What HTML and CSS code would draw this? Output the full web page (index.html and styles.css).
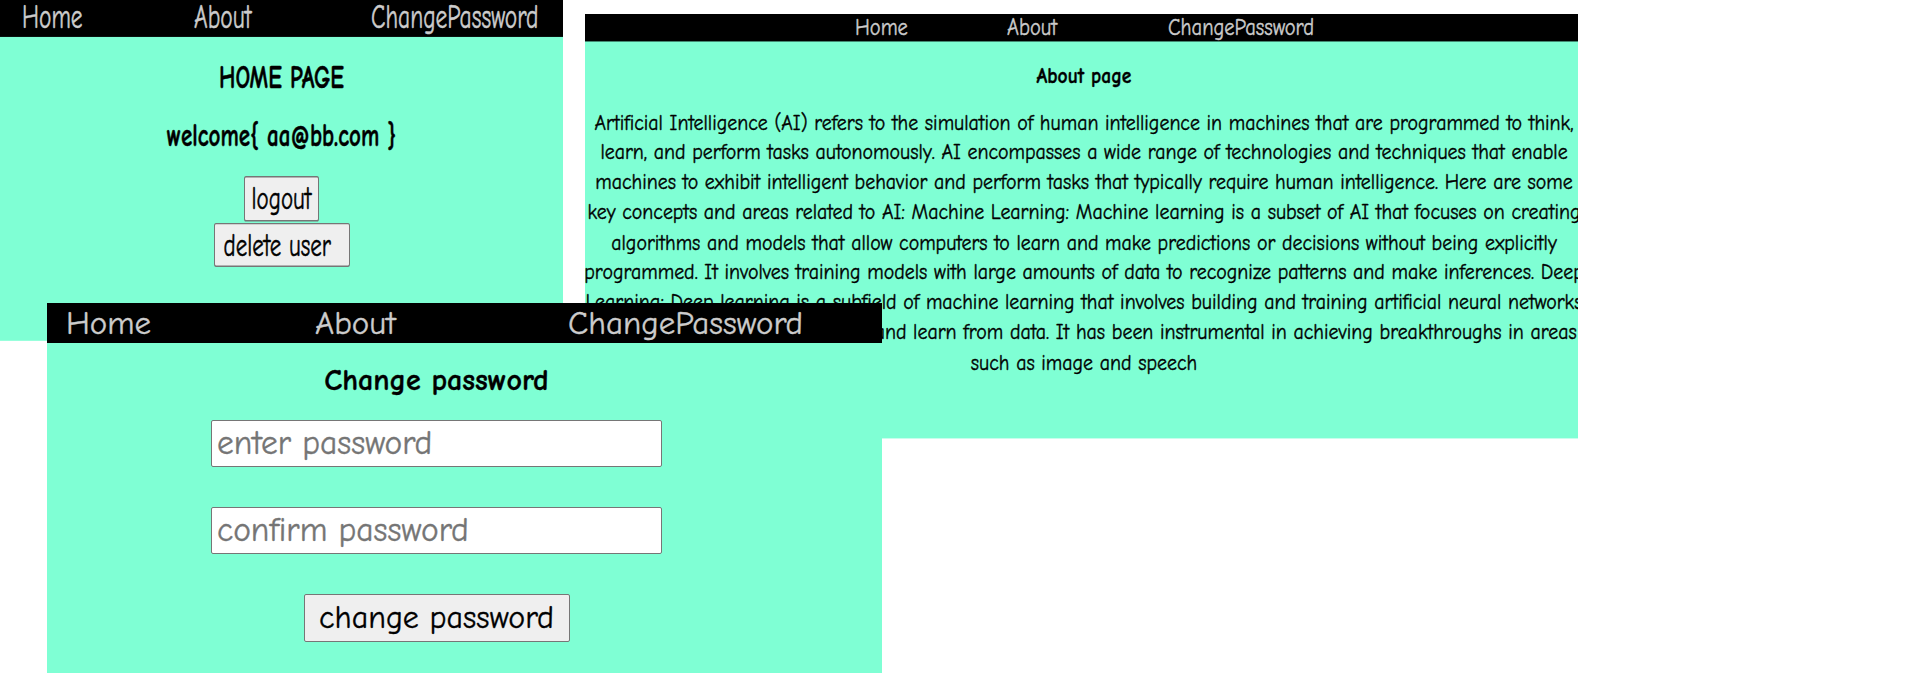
FILE: index.html
```html
<!DOCTYPE html>
<html lang="en">
<head>
<meta charset="utf-8">
<title>Pages</title>
<link rel="stylesheet" href="styles.css">
</head>
<body>
<div class="desk">
  <section class="win win-about">
    <nav class="nav nav-about"><a href="#">Home</a><a href="#">About</a><a href="#">ChangePassword</a></nav>
    <div class="about-body">
      <h3 class="about-title">About page</h3>
      <p class="about-text">Artificial Intelligence (AI) refers to the simulation of human intelligence in machines that are programmed to think,<br>learn, and perform tasks autonomously. AI encompasses a wide range of technologies and techniques that enable<br>machines to exhibit intelligent behavior and perform tasks that typically require human intelligence. Here are some<br>key concepts and areas related to AI: Machine Learning: Machine learning is a subset of AI that focuses on creating<br>algorithms and models that allow computers to learn and make predictions or decisions without being explicitly<br>programmed. It involves training models with large amounts of data to recognize patterns and make inferences. Deep<br>Learning: Deep learning is a subfield of machine learning that involves building and training artificial neural networks<br>that can mimic the human brain and learn from data. It has been instrumental in achieving breakthroughs in areas<br>such as image and speech</p>
    </div>
  </section>

  <section class="win win-home">
    <nav class="nav nav-home"><a href="#">Home</a><a href="#">About</a><a href="#">ChangePassword</a></nav>
    <h3 class="home-title">HOME PAGE</h3>
    <h3 class="welcome">welcome{ aa@bb.com }</h3>
    <div class="home-actions">
      <button class="btn btn-logout">logout</button>
      <button class="btn btn-delete">delete user</button>
    </div>
  </section>

  <section class="win win-change">
    <nav class="nav nav-change"><a href="#">Home</a><a href="#">About</a><a href="#">ChangePassword</a></nav>
    <div class="change-body">
      <h2 class="change-title">Change password</h2>
      <input class="field" type="password" placeholder="enter password">
      <input class="field" type="password" placeholder="confirm password">
      <button class="btn btn-change">change password</button>
    </div>
  </section>
</div>
</body>
</html>
```
FILE: styles.css
```css
html, body {
  margin: 0;
  padding: 0;
  background: #ffffff;
}

body {
  font-family: "Comic Neue", "Open Sans", sans-serif;
  color: #000;
  width: 1912px;
  height: 695px;
  overflow: hidden;
  -webkit-text-stroke: 0.35px currentColor;
}

.desk {
  position: relative;
  width: 1912px;
  height: 695px;
}

/* windows placed freely on the desktop canvas */
.win {
  position: absolute;
  background: #7fffd4;
  overflow: hidden;
  transform-origin: 0 0;
}

.win-home {
  left: 0;
  top: 0;
  width: 563px;
  height: 240.1px;
  transform: scaleY(1.42);
}

.win-about {
  left: 585px;
  top: 14px;
  width: 993px;
  height: 370.6px;
  transform: scaleY(1.144);
}

.win-change {
  left: 47px;
  top: 303px;
  width: 835px;
  height: 370px;
}

/* nav bars */
.nav {
  display: grid;
  align-items: start;
  background: #000;
}

.nav a {
  color: #cccccc;
  text-decoration: none;
  white-space: nowrap;
}

.nav-home {
  height: 26.06px;
  padding-left: 22px;
  grid-template-columns: 172px 177px auto;
  font-size: 23.5px;
  line-height: 26px;
}

.nav-about {
  height: 23.6px;
  padding-left: 270px;
  grid-template-columns: 152px 161px auto;
  font-size: 20.5px;
  line-height: 23.6px;
}

.nav-change {
  height: 40px;
  padding-left: 19px;
  grid-template-columns: 249px 253px auto;
  font-size: 33px;
  line-height: 40px;
}

/* buttons */
.btn {
  font-family: inherit;
  color: #000;
  background: #efefef;
  border: 1px solid #767676;
  border-radius: 2px;
  padding: 0;
  line-height: normal;
  -webkit-text-stroke: 0.35px currentColor;
}

/* home window */
.home-title,
.welcome {
  margin: 14.5px 0 0;
  font-size: 23px;
  font-weight: 700;
  line-height: normal;
  text-align: center;
}

.welcome {
  margin-top: 14.85px;
}

.home-actions {
  margin-top: 14.15px;
  display: flex;
  flex-direction: column;
  align-items: center;
  gap: 0.7px;
}

.btn-logout {
  width: 75px;
  height: 32.4px;
  font-size: 23px;
}

.btn-delete {
  width: 136px;
  height: 31.7px;
  font-size: 23px;
  text-align: left;
  padding-left: 9px;
}

/* about window */
.about-body {
  width: 1000px;
  margin-left: -1px;
}

.about-title {
  margin: 17.95px 0 0;
  font-size: 19.5px;
  font-weight: 700;
  line-height: 23px;
  text-align: center;
}

.about-text {
  margin: 17.3px 0 0;
  font-size: 19.9px;
  line-height: 26.22px;
  white-space: nowrap;
  text-align: center;
}

/* change password window */
.change-body {
  width: 779px;
  display: flex;
  flex-direction: column;
  align-items: center;
}

.change-title {
  margin: 20px 0 0;
  font-size: 30px;
  font-weight: 700;
  line-height: normal;
}

.field {
  box-sizing: border-box;
  width: 451px;
  height: 47px;
  margin-top: 40px;
  padding: 0 5px;
  border: 1px solid #767676;
  border-radius: 2px;
  background: #fff;
  font-family: inherit;
  font-size: 33.5px;
  color: #000;
}

.change-title + .field {
  margin-top: 21.5px;
}

.field::placeholder {
  color: #757575;
  -webkit-text-stroke: 0.35px #757575;
}

.btn-change {
  margin-top: 40px;
  width: 266px;
  height: 48px;
  font-size: 32px;
}
```
